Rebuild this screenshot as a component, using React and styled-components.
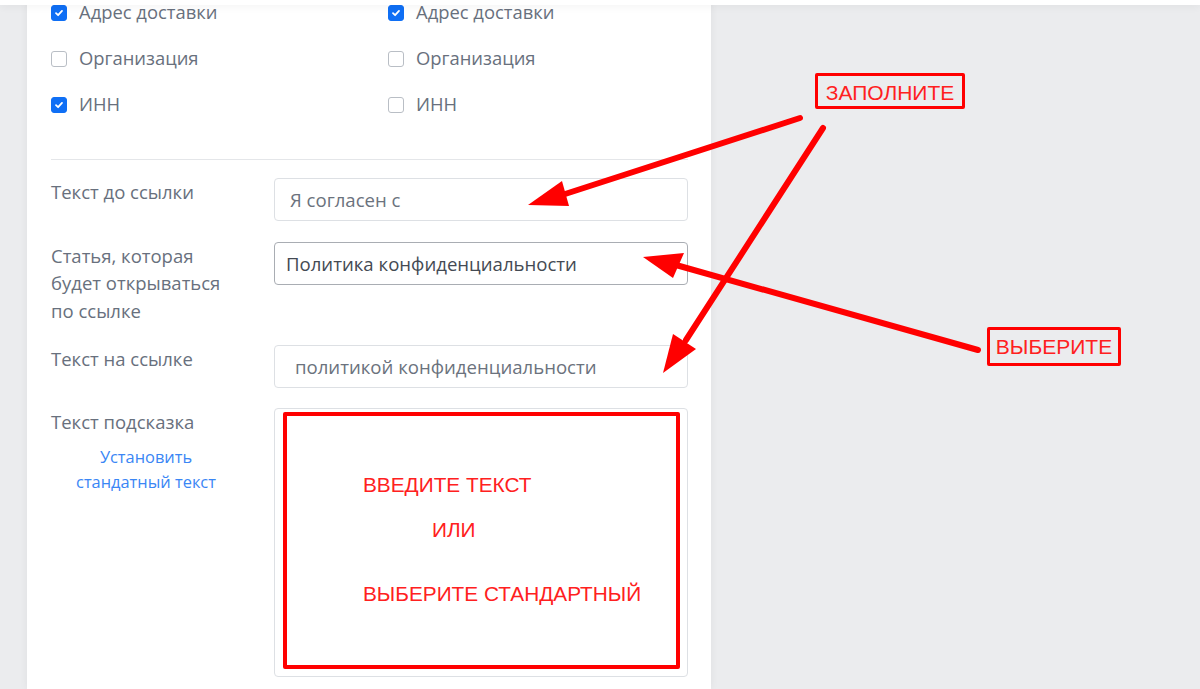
import React from "react";
import styled, { createGlobalStyle } from "styled-components";

const Global = createGlobalStyle`
  html, body { margin: 0; padding: 0; }
  body { background: #ebecee; font-family: "Open Sans", "Noto Sans", sans-serif; }
`;

const Page = styled.div`
  position: relative;
  width: 1200px;
  height: 689px;
  overflow: hidden;
  background: #ebecee;
  display: flex;
  padding-left: 27px;
  box-sizing: border-box;
`;

const TopBar = styled.div`
  position: absolute;
  top: 0;
  left: 0;
  right: 0;
  height: 5px;
  background: #fff;
  box-shadow: 0 1px 8px rgba(0, 0, 0, 0.07);
  z-index: 3;
`;

const Panel = styled.div`
  width: 684px;
  background: #fff;
  box-sizing: border-box;
  padding: 0 23px 0 24px;
  box-shadow: 0 0 8px rgba(0, 0, 0, 0.06);
  display: flex;
  flex-direction: column;
`;

const CheckGrid = styled.div`
  display: grid;
  grid-template-columns: 337px 1fr;
  row-gap: 20px;
`;

const CheckRow = styled.label`
  display: flex;
  align-items: center;
  gap: 12px;
  height: 26px;
  font-size: 18.4px;
  color: #68707d;
  white-space: nowrap;
`;

const CheckText = styled.span`
  line-height: 26px;
  margin-top: -2px;
`;

const Box = styled.span`
  width: 16px;
  height: 16px;
  box-sizing: border-box;
  border-radius: 3px;
  flex: none;
  display: flex;
  align-items: center;
  justify-content: center;
  background: ${(p) => (p.$checked ? "#0f6ff5" : "#fff")};
  border: 1px solid ${(p) => (p.$checked ? "#0f6ff5" : "#b9bec5")};
`;

const Divider = styled.hr`
  border: 0;
  border-top: 1px solid #e4e6e9;
  margin: 41px 0 18px;
`;

const Form = styled.div`
  display: grid;
  grid-template-columns: 223px 414px;
  row-gap: 20.5px;
`;

const Label = styled.div`
  width: 193px;
  font-size: 18.5px;
  line-height: 27.5px;
  color: #68707d;
`;

const Input = styled.div`
  height: 43px;
  box-sizing: border-box;
  border: 1px solid ${(p) => (p.$strong ? "#a9adb3" : "#dde0e4")};
  border-radius: 4px;
  display: flex;
  align-items: center;
  padding-left: ${(p) => p.$pad || 15}px;
  font-size: 18.6px;
  color: ${(p) => (p.$strong ? "#444a53" : "#6b727d")};
  white-space: nowrap;
`;

const LinkText = styled.a`
  display: block;
  margin-top: 8px;
  text-align: center;
  width: 190px;
  font-size: 16.4px;
  line-height: 25px;
  color: #3a86f5;
  text-decoration: none;
`;

const Textarea = styled.div`
  height: 269px;
  box-sizing: border-box;
  border: 1px solid #dde0e4;
  border-radius: 4px;
  padding: 3px 7px 7px 8px;
  display: flex;
`;

const RedFrame = styled.div`
  flex: 1;
  border: 4px solid #ff0000;
  border-radius: 2px;
  padding: 57px 0 0 76px;
  display: flex;
  flex-direction: column;
  font-family: "Liberation Sans", Arial, sans-serif;
  font-size: 20.8px;
  color: #ff2020;
  white-space: nowrap;
`;

const RedLine = styled.div`
  line-height: 24px;
  margin-top: ${(p) => p.$mt || 0}px;
  padding-left: ${(p) => p.$indent || 0}px;
`;

const Overlay = styled.svg`
  position: absolute;
  inset: 0;
  pointer-events: none;
  z-index: 2;
`;

const Note = styled.div`
  position: absolute;
  box-sizing: border-box;
  border: 3px solid #ff0000;
  border-radius: 2px;
  display: flex;
  align-items: center;
  justify-content: center;
  padding-top: ${(p) => p.$pt || 0}px;
  font-family: "Liberation Sans", Arial, sans-serif;
  font-size: 21px;
  color: #ff2020;
  z-index: 2;
`;

const Check = () => (
  <svg width="10" height="10" viewBox="0 0 10 10">
    <path d="M2 5.2 L4.1 7.2 L8 2.9" fill="none" stroke="#fff" strokeWidth="1.8" strokeLinecap="round" strokeLinejoin="round" />
  </svg>
);

const Item = ({ checked, children }) => (
  <CheckRow>
    <Box $checked={checked}>{checked && <Check />}</Box>
    <CheckText>{children}</CheckText>
  </CheckRow>
);

export default function App() {
  return (
    <>
      <Global />
      <Page>
        <TopBar />
        <Panel>
          <CheckGrid>
            <Item checked>Адрес доставки</Item>
            <Item checked>Адрес доставки</Item>
            <Item>Организация</Item>
            <Item>Организация</Item>
            <Item checked>ИНН</Item>
            <Item>ИНН</Item>
          </CheckGrid>
          <Divider />
          <Form>
            <Label>Текст до ссылки</Label>
            <Input>Я согласен с</Input>
            <Label>Статья, которая будет открываться по ссылке</Label>
            <Input $strong $pad={11}>Политика конфиденциальности</Input>
            <Label>Текст на ссылке</Label>
            <Input $pad={20}>политикой конфиденциальности</Input>
            <div>
              <Label>Текст подсказка</Label>
              <LinkText href="#">Установить<br />стандатный текст</LinkText>
            </div>
            <Textarea>
              <RedFrame>
                <RedLine>ВВЕДИТЕ ТЕКСТ</RedLine>
                <RedLine $mt={21} $indent={69}>ИЛИ</RedLine>
                <RedLine $mt={40}>ВЫБЕРИТЕ СТАНДАРТНЫЙ</RedLine>
              </RedFrame>
            </Textarea>
          </Form>
        </Panel>
        <Overlay width="1200" height="689" viewBox="0 0 1200 689">
          <g stroke="#ff0000" strokeWidth="6" strokeLinecap="round" fill="none">
            <line x1="800" y1="118" x2="562" y2="195" />
            <line x1="823" y1="128" x2="686" y2="340" />
            <line x1="978" y1="350" x2="676" y2="265" />
          </g>
          <g fill="#ff0000">
            <polygon points="528,205 562,181 569,206" />
            <polygon points="663,373 673,334 696,349" />
            <polygon points="643,257 684,253 673,278" />
          </g>
        </Overlay>
        <Note $pt={3} style={{ left: 815, top: 73, width: 150, height: 36 }}>ЗАПОЛНИТЕ</Note>
        <Note $pt={1} style={{ left: 987, top: 327, width: 134, height: 39 }}>ВЫБЕРИТЕ</Note>
      </Page>
    </>
  );
}
